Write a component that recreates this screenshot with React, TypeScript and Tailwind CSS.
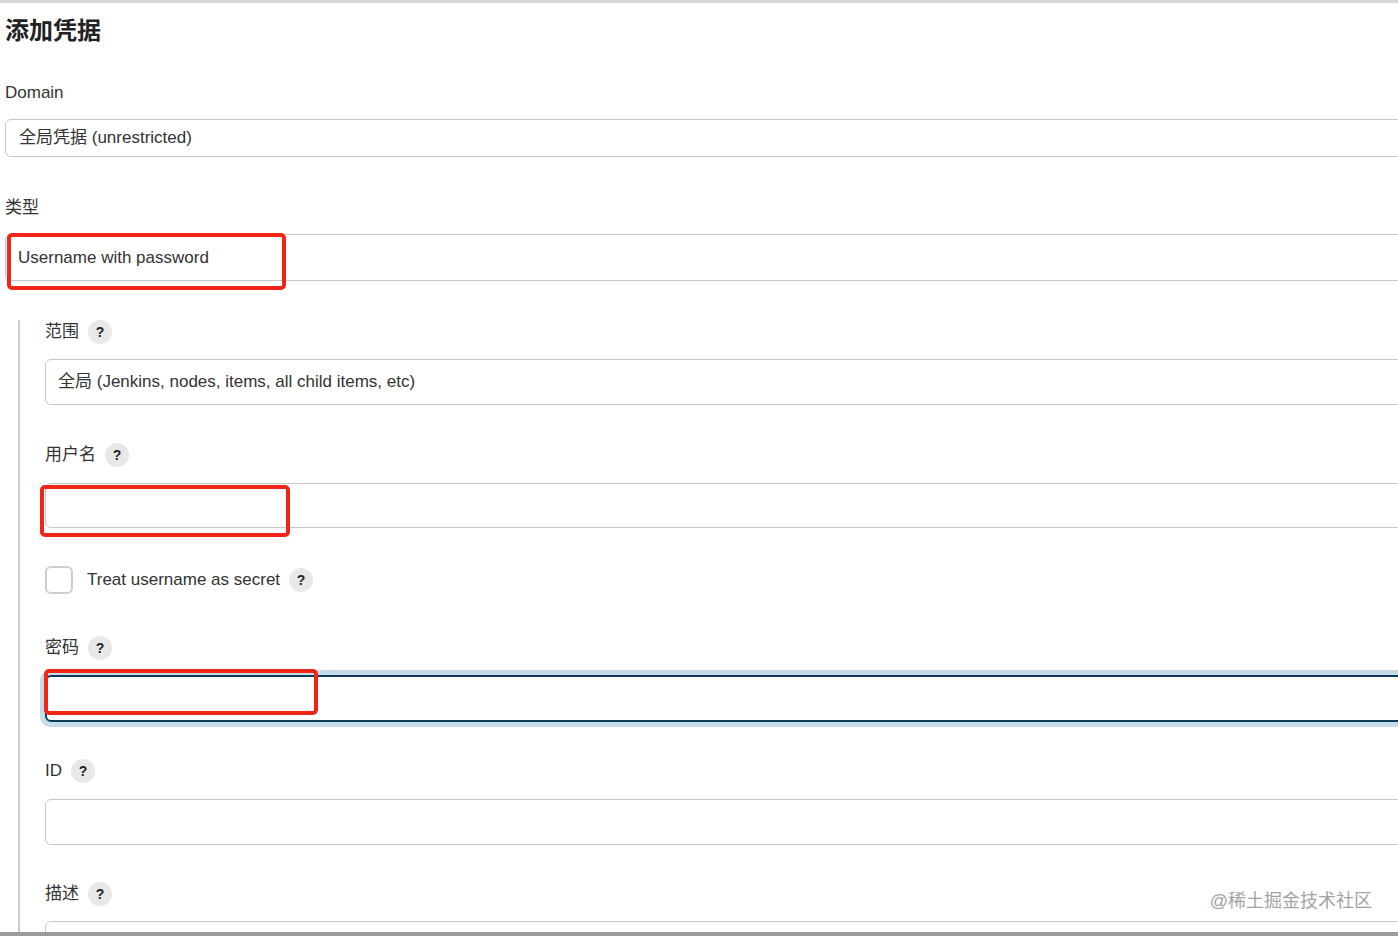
const Help = () => (
  <span className="ml-[9px] flex h-[24px] w-[24px] items-center justify-center rounded-full bg-[#e8e8e8] text-[14px] font-bold text-[#222]">
    ?
  </span>
);

const Label = ({ text }: { text: string }) => (
  <div className="flex h-[24px] items-center text-[17px] text-[#333]">
    <span>{text}</span>
    <Help />
  </div>
);

const RedMark = ({ className }: { className: string }) => (
  <div className={"pointer-events-none absolute rounded-[5px] border-4 border-[#f02418] " + className} />
);

const App = () => {
  return (
    <div
      className="relative h-[936px] w-full overflow-hidden bg-white"
      style={{ fontFamily: '"Liberation Sans", "Noto Sans CJK SC", sans-serif' }}
    >
      <div className="h-[3px] bg-[#d6d6d6]" />

      <div className="pl-[5px]">
        <h1 className="mt-[12px] h-[32px] text-[24px] font-bold leading-[32px] text-[#222]">添加凭据</h1>

        <div className="mt-[36px] h-[20px] text-[17px] leading-[20px] text-[#333]">Domain</div>
        <div className="-mr-[20px] mt-[16px] flex h-[38px] items-center rounded-[6px] border border-[#c6c6c6] pl-[13px] text-[17px] text-[#333]">
          全局凭据 (unrestricted)
        </div>

        <div className="mt-[41px] h-[20px] text-[17px] leading-[20px] text-[#333]">类型</div>
        <div className="relative -mr-[20px] mt-[16px]">
          <div className="flex h-[47px] items-center rounded-[6px] border border-[#c6c6c6] pl-[12px] text-[17px] text-[#333]">
            Username with password
          </div>
          <RedMark className="left-[2px] top-[-1px] h-[57px] w-[279px]" />
        </div>

        <div className="ml-[13px] mt-[39px] border-l-2 border-[#cbcbcb] pb-[40px] pl-[25px]">
          <Label text="范围" />
          <div className="-mr-[20px] mt-[15px] flex h-[46px] items-center rounded-[6px] border border-[#c6c6c6] pl-[12px] text-[17px] text-[#333]">
            全局 (Jenkins, nodes, items, all child items, etc)
          </div>

          <div className="mt-[38px]">
            <Label text="用户名" />
          </div>
          <div className="relative -mr-[20px] mt-[16px]">
            <div className="h-[45px] rounded-[6px] border border-[#c6c6c6]" />
            <RedMark className="left-[-5px] top-[2px] h-[52px] w-[250px]" />
          </div>

          <div className="mt-[38px] flex h-[28px] items-center">
            <span className="h-[28px] w-[28px] rounded-[6px] border-2 border-[#cdcdcd]" />
            <span className="ml-[14px] text-[17px] text-[#333]">Treat username as secret</span>
            <Help />
          </div>

          <div className="mt-[42px]">
            <Label text="密码" />
          </div>
          <div className="relative -mr-[20px] mt-[15px]">
            <div className="h-[47px] rounded-[6px] border-2 border-[#0d3a56] shadow-[0_0_0_5px_#c4dbe8]" />
            <RedMark className="left-[-1px] top-[-6px] h-[46px] w-[274px]" />
          </div>

          <div className="mt-[37px]">
            <Label text="ID" />
          </div>
          <div className="-mr-[20px] mt-[16px] h-[46px] rounded-[6px] border border-[#c6c6c6]" />

          <div className="mt-[37px]">
            <Label text="描述" />
          </div>
          <div className="-mr-[20px] mt-[15px] h-[60px] rounded-[6px] border border-[#c6c6c6]" />
        </div>
      </div>

      <div className="absolute right-[26px] top-[888px] text-[18px] text-[#a3a3a3]">@稀土掘金技术社区</div>
      <div className="absolute bottom-0 left-0 h-[4px] w-full bg-[#9c9c9c]" />
    </div>
  );
};

export default App;
